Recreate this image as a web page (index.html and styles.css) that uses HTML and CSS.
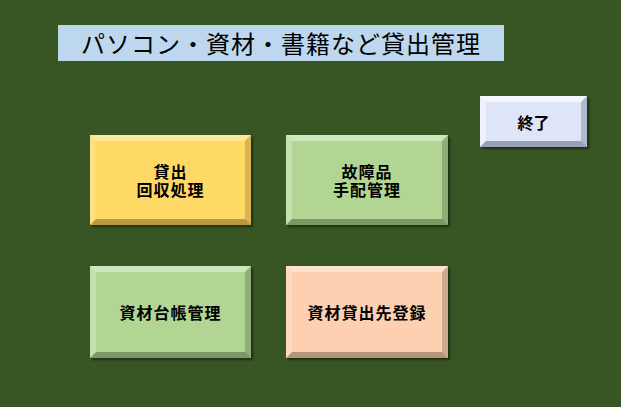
FILE: index.html
```html
<!DOCTYPE html>
<html lang="ja">
<head>
<meta charset="utf-8">
<title>パソコン・資材・書籍など貸出管理</title>
<link rel="stylesheet" href="styles.css">
</head>
<body>
<div class="page">
  <div class="title">パソコン・資材・書籍など貸出管理</div>
  <div class="main">
    <div class="grid">
      <div class="btn yellow">貸出<br>回収処理</div>
      <div class="btn green">故障品<br>手配管理</div>
      <div class="btn green tall">資材台帳管理</div>
      <div class="btn peach tall">資材貸出先登録</div>
    </div>
    <div class="btn end">終了</div>
  </div>
</div>
</body>
</html>
```

FILE: styles.css
```css
html, body {
  margin: 0;
  padding: 0;
  background: #375623;
  width: 621px;
  height: 407px;
  overflow: hidden;
}
.page {
  padding: 25px 0 0 58px;
  font-family: "Noto Sans CJK JP", "Noto Sans", sans-serif;
  color: #000;
}
.title {
  width: 446px;
  height: 36px;
  box-sizing: border-box;
  background: #bdd7ee;
  padding-left: 23px;
  font-size: 24px;
  letter-spacing: 1px;
  line-height: 36px;
  white-space: nowrap;
}
.main {
  display: flex;
  align-items: flex-start;
  margin-top: 35px;
}
.grid {
  display: grid;
  grid-template-columns: 161px 162px;
  grid-template-rows: 90px 92px;
  column-gap: 35px;
  row-gap: 41px;
  margin-left: 32px;
  margin-top: 39px;
}
.btn {
  box-sizing: border-box;
  display: flex;
  align-items: center;
  justify-content: center;
  text-align: center;
  border-style: solid;
  border-width: 6px;
  font-weight: bold;
  font-size: 16px;
  letter-spacing: 1px;
  line-height: 18px;
  box-shadow: 2px 2px 2px rgba(0, 0, 0, 0.45);
}
.yellow {
  background: #ffd966;
  border-color: #ffe899 #d9b450 #b99a3e #ffe182;
}
.green {
  background: #b1d693;
  border-color: #cfe7bd #8fae77 #7b9866 #c3e0ad;
}
.peach {
  background: #fcd0b1;
  border-color: #fee3cf #cfa98e #b6947b #fedac1;
}
.end {
  width: 107px;
  height: 51px;
  margin-left: 32px;
  background: #dfe5f8;
  border-color: #f6f8fe #b0b8d2 #98a0bd #eef1fb;
  letter-spacing: 0;
}
```
